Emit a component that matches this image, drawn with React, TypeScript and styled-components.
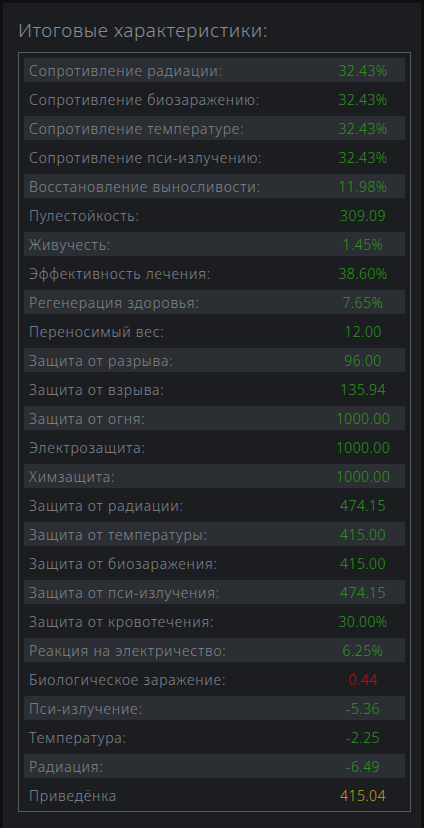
import React from "react";
import styled, { createGlobalStyle } from "styled-components";

const Global = createGlobalStyle`
  html, body { margin: 0; padding: 0; background: #0e0f11; }
  body { font-family: "Noto Sans", "Open Sans", sans-serif; }
`;

const Page = styled.div`
  padding: 3px 3px 0 3px;
  min-height: 828px;
  box-sizing: border-box;
`;

const Panel = styled.section`
  background: #1b1d21;
  padding: 14px 10px 16px 15px;
  min-height: 825px;
  box-sizing: border-box;
`;

const Title = styled.h2`
  margin: 0 0 8px 0;
  font-weight: 300;
  font-size: 19px;
  letter-spacing: 0.55px;
  line-height: 27px;
  color: #8a9096;
`;

const Box = styled.div`
  border: 1px solid #55585c;
  padding: 5px 5px 4px 5px;
  display: flex;
  flex-direction: column;
  gap: 5px;
`;

const Row = styled.div<{ $striped: boolean }>`
  height: 24px;
  display: grid;
  grid-template-columns: 1fr 84px;
  align-items: center;
  background: ${(p) => (p.$striped ? "#2b2e32" : "transparent")};
  padding-left: 5px;
  font-size: 14px;
  font-weight: 300;
  letter-spacing: 0.8px;
`;

const Label = styled.span`
  color: #83898f;
  white-space: nowrap;
`;

const Value = styled.span<{ $tone: "good" | "bad" | "total" }>`
  text-align: center;
  letter-spacing: 0.4px;
  color: ${(p) =>
    p.$tone === "good" ? "#2c9c1c" : p.$tone === "bad" ? "#b81414" : "#c9a21b"};
`;

type Stat = { label: string; value: string; tone?: "good" | "bad" | "total" };

const stats: Stat[] = [
  { label: "Сопротивление радиации:", value: "32.43%" },
  { label: "Сопротивление биозаражению:", value: "32.43%" },
  { label: "Сопротивление температуре:", value: "32.43%" },
  { label: "Сопротивление пси-излучению:", value: "32.43%" },
  { label: "Восстановление выносливости:", value: "11.98%" },
  { label: "Пулестойкость:", value: "309.09" },
  { label: "Живучесть:", value: "1.45%" },
  { label: "Эффективность лечения:", value: "38.60%" },
  { label: "Регенерация здоровья:", value: "7.65%" },
  { label: "Переносимый вес:", value: "12.00" },
  { label: "Защита от разрыва:", value: "96.00" },
  { label: "Защита от взрыва:", value: "135.94" },
  { label: "Защита от огня:", value: "1000.00" },
  { label: "Электрозащита:", value: "1000.00" },
  { label: "Химзащита:", value: "1000.00" },
  { label: "Защита от радиации:", value: "474.15" },
  { label: "Защита от температуры:", value: "415.00" },
  { label: "Защита от биозаражения:", value: "415.00" },
  { label: "Защита от пси-излучения:", value: "474.15" },
  { label: "Защита от кровотечения:", value: "30.00%" },
  { label: "Реакция на электричество:", value: "6.25%" },
  { label: "Биологическое заражение:", value: "0.44", tone: "bad" },
  { label: "Пси-излучение:", value: "-5.36" },
  { label: "Температура:", value: "-2.25" },
  { label: "Радиация:", value: "-6.49" },
  { label: "Приведёнка", value: "415.04", tone: "total" },
];

export default function App() {
  return (
    <>
      <Global />
      <Page>
        <Panel>
          <Title>Итоговые характеристики:</Title>
          <Box>
            {stats.map((s, i) => (
              <Row key={s.label} $striped={i % 2 === 0}>
                <Label>{s.label}</Label>
                <Value $tone={s.tone ?? "good"}>{s.value}</Value>
              </Row>
            ))}
          </Box>
        </Panel>
      </Page>
    </>
  );
}
